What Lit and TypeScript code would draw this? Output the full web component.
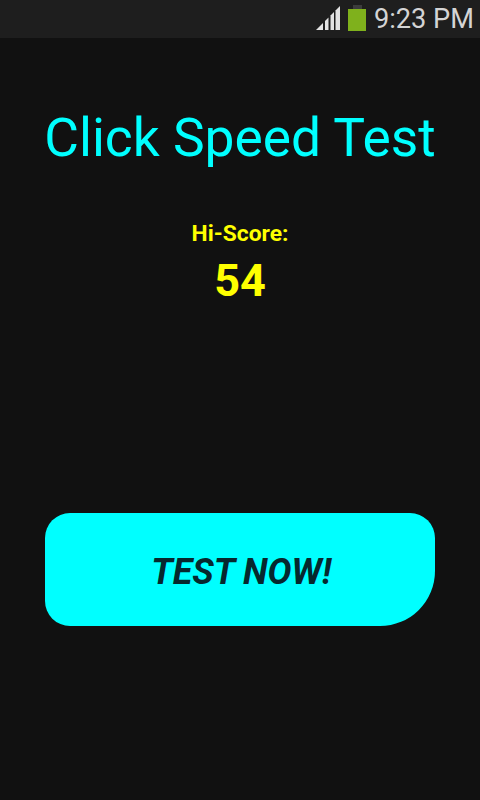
import { LitElement, html, css } from "lit";
import { customElement } from "lit/decorators.js";

@customElement("app-root")
export class AppRoot extends LitElement {
  static styles = css`
    :host { display: block; width: 480px; height: 800px; background: #111111; font-family: Roboto, sans-serif; overflow: hidden; }
    .status { height: 38px; box-sizing: border-box; background: #1e1e1e; display: flex; align-items: center; justify-content: flex-end; padding: 0 6px 2px 0; }
    .status svg { display: block; }
    .signal { margin-right: 8px; }
    .battery { margin-right: 8px; }
    .time { font-family: "Roboto", sans-serif; font-size: 27.2px; color: #d4d4d4; line-height: 36px; padding-top: 2px; }
    .main { display: flex; flex-direction: column; align-items: center; }
    h1 { margin: 67px 0 0; font-weight: 400; font-size: 53.3px; line-height: 66px; color: #00ffff; }
    .label { margin-top: 49px; font-size: 22.8px; font-weight: 700; line-height: 28px; color: #ffff00; }
    .score { margin-top: 6px; font-size: 45px; font-weight: 700; line-height: 54px; color: #ffff00; }
    .btn { margin-top: 205px; width: 390px; height: 113px; box-sizing: border-box; padding: 2px 0 0 2px; background: #00ffff; border-radius: 25px 25px 55px 25px; display: flex; align-items: center; justify-content: center; font-size: 37.5px; font-weight: 700; font-style: italic; color: #06282e; }
    .btn span { display: block; transform: scaleX(0.955); }
  `;
  render() {
    return html`
      <div class="status">
        <svg class="signal" width="24" height="24" viewBox="0 0 24 24" fill="#e4e4e4">
          <path d="M0 24 L7 17 V24 Z"/>
          <path d="M9 15 L12.5 11.5 V24 H9 Z"/>
          <path d="M14.5 9.5 L18 6 V24 H14.5 Z"/>
          <path d="M19.5 4.5 L24 0 V24 H19.5 Z"/>
        </svg>
        <svg class="battery" width="18" height="26" viewBox="0 0 18 26">
          <rect x="5" y="0" width="9" height="4" fill="#3c3c3c"/>
          <rect x="0" y="4" width="18" height="22" fill="#7fb11c"/>
        </svg>
        <span class="time">9:23 PM</span>
      </div>
      <div class="main">
        <h1>Click Speed Test</h1>
        <div class="label">Hi-Score:</div>
        <div class="score">54</div>
        <div class="btn"><span>TEST NOW!</span></div>
      </div>
    `;
  }
}
